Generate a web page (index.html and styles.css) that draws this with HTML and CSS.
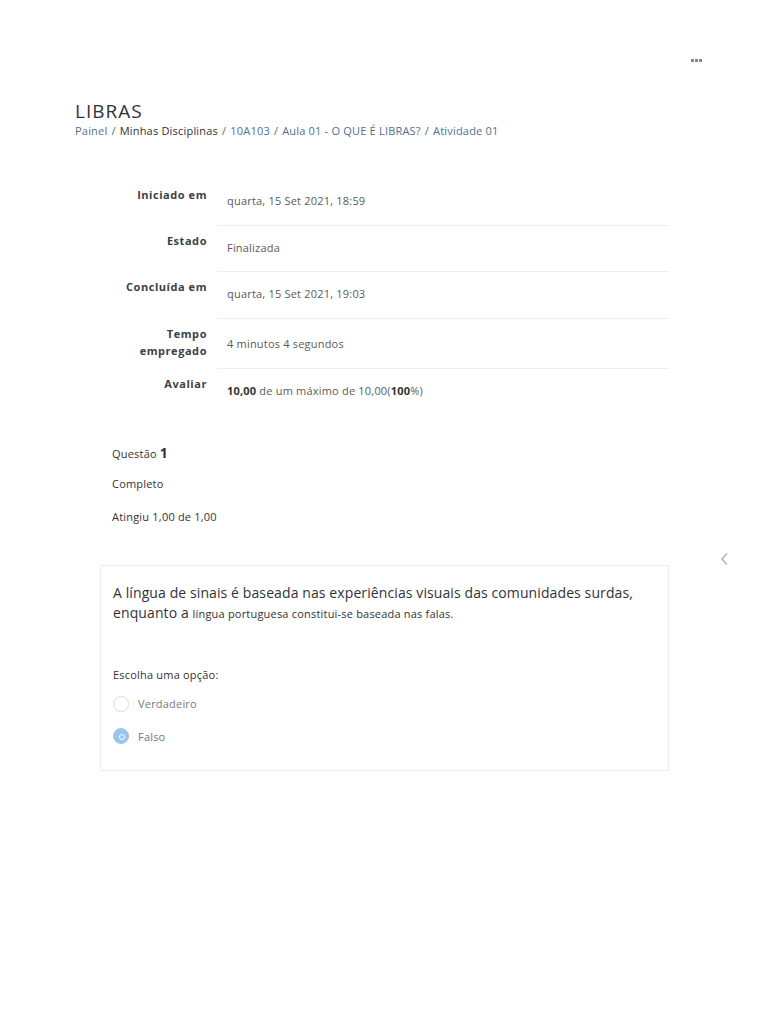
FILE: index.html
```html
<!DOCTYPE html>
<html lang="pt">
<head>
<meta charset="utf-8">
<title>LIBRAS</title>
<link rel="stylesheet" href="styles.css">
</head>
<body>
<div class="page">
  <div class="topbar">
    <span class="dots"><i></i><i></i><i></i></span>
  </div>
  <header class="head">
    <h1 class="title">LIBRAS</h1>
    <nav class="crumbs">
      <a href="#">Painel</a><span class="sep">/</span><span class="plain">Minhas Disciplinas</span><span class="sep">/</span><a href="#">10A103</a><span class="sep">/</span><a href="#">Aula 01 - O QUE É LIBRAS?</a><span class="sep">/</span><a href="#">Atividade 01</a>
    </nav>
  </header>

  <table class="summary">
    <tr class="r1"><th>Iniciado em</th><td>quarta, 15 Set 2021, 18:59</td></tr>
    <tr class="r2"><th>Estado</th><td>Finalizada</td></tr>
    <tr class="r3"><th>Concluída em</th><td>quarta, 15 Set 2021, 19:03</td></tr>
    <tr class="r4"><th>Tempo empregado</th><td>4 minutos 4 segundos</td></tr>
    <tr class="r5"><th>Avaliar</th><td><b>10,00</b> de um máximo de 10,00(<b>100</b>%)</td></tr>
  </table>

  <section class="qinfo">
    <div class="qno">Questão <span class="num">1</span></div>
    <div class="qstate">Completo</div>
    <div class="qgrade">Atingiu 1,00 de 1,00</div>
  </section>

  <div class="qwrap">
    <div class="card">
      <p class="qtext">A língua de sinais é baseada nas experiências visuais das comunidades surdas, enquanto a <span class="small">língua portuguesa constitui-se baseada nas falas.</span></p>
      <div class="prompt">Escolha uma opção:</div>
      <div class="opt first"><span class="radio"></span><span>Verdadeiro</span></div>
      <div class="opt second"><span class="radio on"></span><span>Falso</span></div>
    </div>
    <svg class="chev" width="10" height="14" viewBox="0 0 10 14"><path d="M7 1.5 L2 7 L7 12.5" fill="none" stroke="#b5b5b5" stroke-width="1.6"/></svg>
  </div>
</div>
</body>
</html>
```

FILE: styles.css
```css
* { box-sizing: border-box; }
html, body { margin: 0; padding: 0; background: #fff; }
body { font-family: "Open Sans", "Noto Sans", sans-serif; color: #444; letter-spacing: 0.2px; }
.page { width: 768px; }
.topbar { height: 100px; display: flex; justify-content: flex-end; padding: 59px 66px 0 0; }
.dots { display: flex; gap: 1px; height: 4px; }
.dots i { width: 3px; height: 3px; background: #888; display: block; }
.head { padding: 0 0 0 75px; }
.title { margin: 0; font-size: 19px; font-weight: 400; color: #2f3338; line-height: 22px; letter-spacing: 1px; }
.crumbs { font-size: 11px; line-height: 16px; margin-top: 1px; color: #333; }
.crumbs a { color: #4f7090; text-decoration: none; }
.crumbs .sep { color: #666; padding: 0 4px; }
.summary { border-collapse: collapse; margin: 40px 0 0 100px; width: 569px; }
.summary th { width: 117px; text-align: right; font-size: 11px; font-weight: 700; color: #3a4046; padding: 7px 10px 0 0; vertical-align: top; line-height: 17px; letter-spacing: 0.55px; }
.summary td { font-size: 11px; color: #5a5a5a; padding: 13px 10px 0 10px; vertical-align: top; line-height: 17px; }
.summary tr + tr td { border-top: 1px solid #eceef0; }
.summary tr { height: 46px; }
.summary .r3 { height: 47px; }
.summary .r4 { height: 50px; }
.summary .r4 th { padding-left: 0; }
.summary .r4 td { padding-top: 16px; }
.summary td b { color: #333; }
.qinfo { padding: 29px 0 0 112px; font-size: 11px; color: #333; }
.qno { line-height: 20px; }
.qno .num { font-size: 14px; font-weight: 700; }
.qstate { margin-top: 12px; line-height: 16px; }
.qgrade { margin-top: 17px; line-height: 16px; }
.qwrap { display: flex; align-items: flex-start; margin-top: 40px; padding-left: 100px; }
.card { width: 569px; border: 1px solid #eeeeee; padding: 17px 12px 18px 12px; }
.qtext { margin: 0; font-size: 14px; line-height: 20px; color: #2f3338; letter-spacing: 0.1px; }
.qtext .small { font-size: 11px; line-height: 1; letter-spacing: 0.2px; }
.prompt { margin-top: 44px; font-size: 11px; color: #333; line-height: 16px; }
.opt { display: flex; align-items: center; gap: 9px; font-size: 11px; color: #777; height: 33px; }
.opt.first { margin-top: 4px; }
.opt.second { height: 32px; }
.radio { width: 16px; height: 16px; border: 1px solid #dedede; border-radius: 50%; display: block; }
.radio.on { background: #98c4ee; border-color: #98c4ee; position: relative; }
.radio.on::after { content: ""; position: absolute; left: 5px; top: 5px; width: 4px; height: 4px; border-radius: 50%; border: 1px solid #fff; }
.chev { margin: -13px 0 0 51px; }
```
